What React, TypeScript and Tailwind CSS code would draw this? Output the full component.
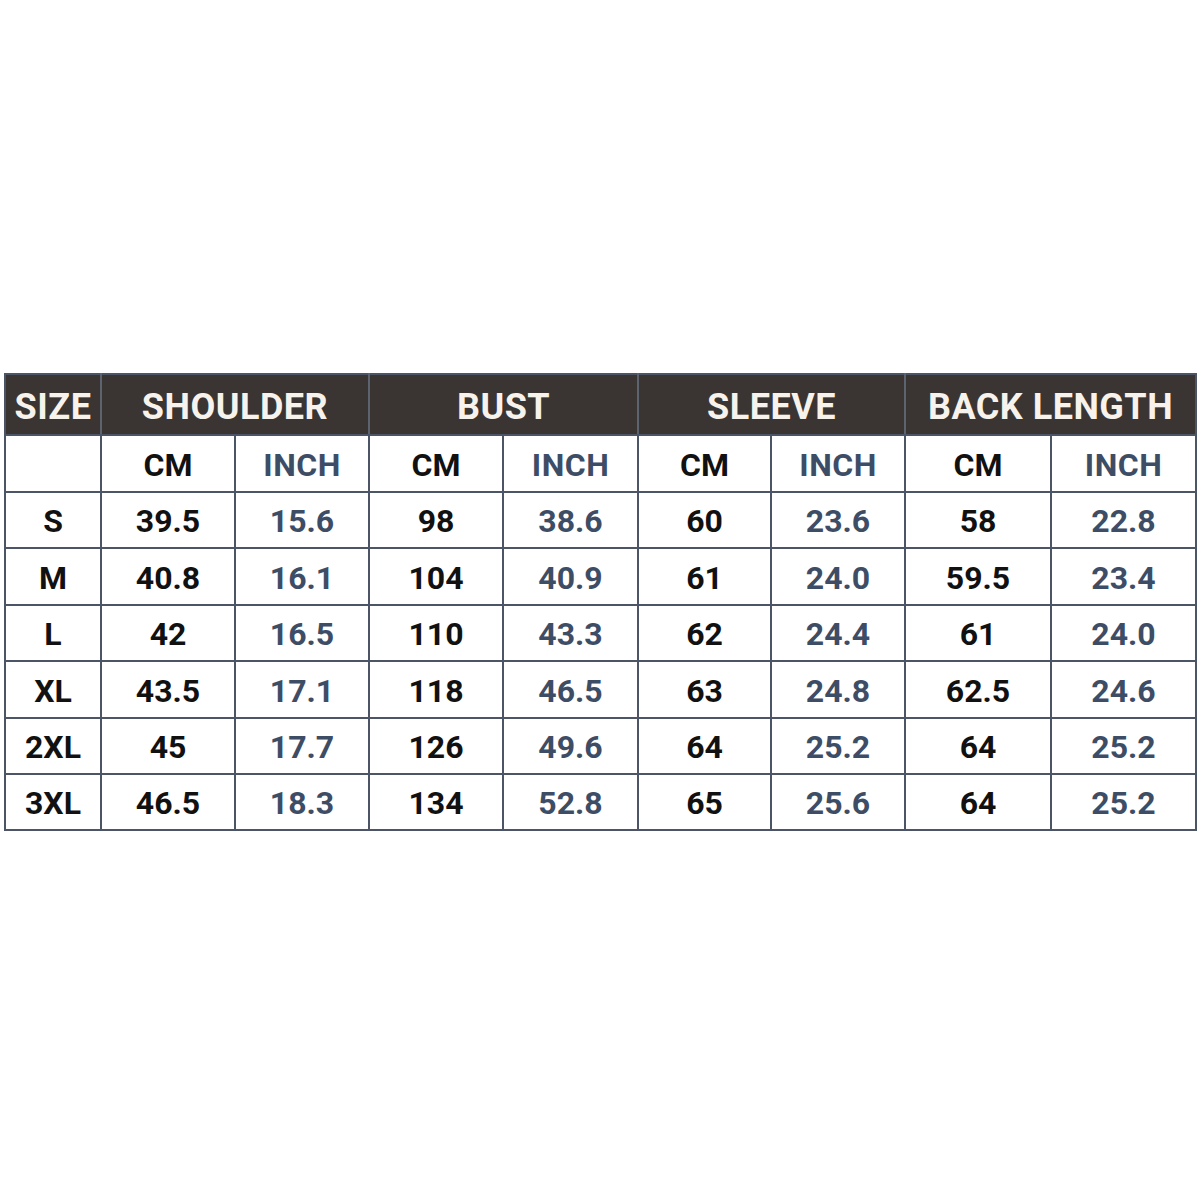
import React from "react";

const rows = [
  ["S", "39.5", "15.6", "98", "38.6", "60", "23.6", "58", "22.8"],
  ["M", "40.8", "16.1", "104", "40.9", "61", "24.0", "59.5", "23.4"],
  ["L", "42", "16.5", "110", "43.3", "62", "24.4", "61", "24.0"],
  ["XL", "43.5", "17.1", "118", "46.5", "63", "24.8", "62.5", "24.6"],
  ["2XL", "45", "17.7", "126", "49.6", "64", "25.2", "64", "25.2"],
  ["3XL", "46.5", "18.3", "134", "52.8", "65", "25.6", "64", "25.2"],
];

const rowH = ["h-[56px]", "h-[57px]", "h-[56px]", "h-[57px]", "h-[56px]", "h-[56px]"];

const widths = [96, 134, 134, 134, 135, 133, 134, 146, 145];

export default function App() {
  return (
    <div
      className="w-[1200px] h-[1200px] bg-white pt-[373px] pl-[4px]"
      style={{ fontFamily: "Roboto, 'Liberation Sans', sans-serif" }}
    >
      <table className="table-fixed border-collapse w-[1191px] font-bold">
        <colgroup>
          {widths.map((w, i) => (
            <col key={i} style={{ width: w }} />
          ))}
        </colgroup>
        <thead>
          <tr className="h-[61px] bg-[#3a3533] text-[#f7f3ec] text-[36px]">
            <th className="border-2 border-[#4b5566] border-r-[#5c6470] font-bold tracking-[0.5px] pt-[4px]">SIZE</th>
            <th colSpan={2} className="border-2 border-[#4b5566] border-x-[#5c6470] font-bold tracking-[0.5px] pt-[4px]">SHOULDER</th>
            <th colSpan={2} className="border-2 border-[#4b5566] border-x-[#5c6470] font-bold tracking-[0.5px] pt-[4px]">BUST</th>
            <th colSpan={2} className="border-2 border-[#4b5566] border-x-[#5c6470] font-bold tracking-[0.5px] pt-[4px]">SLEEVE</th>
            <th colSpan={2} className="border-2 border-[#4b5566] border-l-[#5c6470] font-bold tracking-[0.5px] pt-[4px]">BACK LENGTH</th>
          </tr>
        </thead>
        <tbody className="text-[32px]">
          <tr className="h-[57px]">
            <td className="border-2 border-[#4b5566]"></td>
            {["CM", "INCH", "CM", "INCH", "CM", "INCH", "CM", "INCH"].map((t, i) => (
              <td
                key={i}
                className={`border-2 border-[#4b5566] text-center pt-[2px] ${i % 2 === 0 ? "text-[#111111]" : "text-[#3e4d66] tracking-[0.5px]"}`}
              >
                {t}
              </td>
            ))}
          </tr>
          {rows.map((r, ri) => (
            <tr key={ri} className={rowH[ri]}>
              {r.map((c, ci) => (
                <td
                  key={ci}
                  className={`border-2 border-[#4b5566] text-center pt-[2px] ${ci === 0 || ci % 2 === 1 ? "text-[#111111]" : "text-[#3e4d66]"}`}
                >
                  {c}
                </td>
              ))}
            </tr>
          ))}
        </tbody>
      </table>
    </div>
  );
}
